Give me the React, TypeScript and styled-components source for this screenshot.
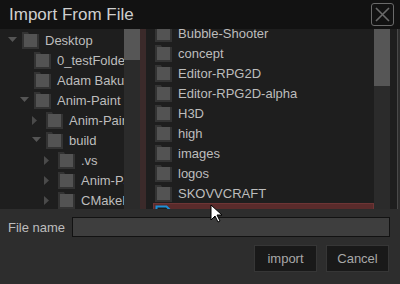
import styled, { createGlobalStyle } from "styled-components";

const GlobalStyle = createGlobalStyle`
  body {
    margin: 0;
    background: #2d2d2d;
    font-family: "Liberation Sans", Arial, sans-serif;
  }
`;

const Dialog = styled.div`
  position: relative;
  width: 400px;
  height: 284px;
  display: flex;
  flex-direction: column;
  background: #2d2d2d;
  overflow: hidden;
`;

const TitleBar = styled.div`
  height: 29px;
  flex-shrink: 0;
  display: flex;
  align-items: center;
  justify-content: space-between;
  background: #121212;
  padding: 0 6px 0 9px;
  color: #cfcfcf;
  font-size: 17px;
`;

const CloseBox = styled.div`
  width: 21px;
  height: 21px;
  border: 1px solid #6a6a6a;
  border-radius: 3px;
  display: flex;
  align-items: center;
  justify-content: center;
`;

const Body = styled.div`
  height: 180px;
  flex-shrink: 0;
  display: flex;
  background: #1e1e1e;
  border-right: 1px solid #4a4a4a;
  margin-right: 2px;
`;

const TreePane = styled.div`
  width: 124px;
  flex-shrink: 0;
  overflow: hidden;
  padding-top: 1px;
`;

const ListPane = styled.div`
  flex: 1;
  overflow: hidden;
  margin-left: 4px;
  padding-left: 3px;
`;

const ListInner = styled.div`
  margin-top: -6px;
`;

const ScrollTrack = styled.div`
  width: 16px;
  flex-shrink: 0;
  background: #2b2b2b;
`;

const Thumb = styled.div<{ $h: number }>`
  height: ${p => p.$h}px;
  background: #565656;
`;

const Splitter = styled.div`
  width: 6px;
  flex-shrink: 0;
  background: #3b2a2a;
`;

const EndGap = styled.div`
  width: 7px;
  flex-shrink: 0;
`;

const Row = styled.div<{ $level: number; $selected?: boolean }>`
  height: 20px;
  display: flex;
  align-items: center;
  white-space: nowrap;
  padding-left: ${p => 8 + p.$level * 12}px;
  color: #bdbdbd;
  font-size: 13px;
  background: ${p => (p.$selected ? "#5a2b2b" : "transparent")};
  box-shadow: ${p => (p.$selected ? "inset 0 0 0 1px #6e3535" : "none")};
`;

const ListRow = styled(Row)`
  padding-left: 2px;
`;

const Arrow = styled.span`
  width: 14px;
  flex-shrink: 0;
  display: flex;
  align-items: center;
`;

const IconSvg = styled.svg`
  flex-shrink: 0;
  display: block;
`;

const Label = styled.span`
  margin-left: 6px;
  flex-shrink: 0;
`;

const Bottom = styled.div`
  flex: 1;
  display: flex;
  flex-direction: column;
  padding: 8px 10px 0 8px;
  gap: 8px;
`;

const NameRow = styled.div`
  display: flex;
  align-items: center;
  gap: 7px;
  color: #bdbdbd;
  font-size: 13px;
`;

const NameInput = styled.div`
  flex: 1;
  height: 18px;
  background: #3e3e3e;
  border: 1px solid #121212;
`;

const Buttons = styled.div`
  display: flex;
  justify-content: flex-end;
  gap: 9px;
  padding-right: 1px;
`;

const Button = styled.div`
  width: 61px;
  height: 25px;
  display: flex;
  align-items: center;
  justify-content: center;
  background: #191919;
  border: 1px solid #363636;
  color: #a8a8a8;
  font-size: 13px;
`;

const Cursor = styled.svg`
  position: absolute;
  left: 210px;
  top: 204px;
`;

const Folder = () => (
  <IconSvg width="17" height="18" viewBox="0 0 17 18">
    <path d="M0 1h6l1 2h10v15H0z" fill="#333" />
    <rect x="2" y="3" width="13" height="13" fill="#535353" />
  </IconSvg>
);

const FileIcon = () => (
  <IconSvg width="17" height="18" viewBox="0 0 17 18">
    <path d="M1.5 2.5h10l4 4v11h-14z" fill="#1b1b1b" stroke="#1c8fd6" strokeWidth="2" />
  </IconSvg>
);

const Down = () => (
  <IconSvg width="9" height="6" viewBox="0 0 9 6">
    <path d="M0 0h9L4.5 5z" fill="#555" />
  </IconSvg>
);

const Right = () => (
  <IconSvg width="6" height="9" viewBox="0 0 6 9">
    <path d="M0 0v9l5-4.5z" fill="#4a4a4a" />
  </IconSvg>
);

type Node = { name: string; level: number; arrow?: "down" | "right" };

const tree: Node[] = [
  { name: "Desktop", level: 0, arrow: "down" },
  { name: "0_testFolder", level: 1 },
  { name: "Adam Bakuli", level: 1 },
  { name: "Anim-Paint", level: 1, arrow: "down" },
  { name: "Anim-Paint", level: 2, arrow: "right" },
  { name: "build", level: 2, arrow: "down" },
  { name: ".vs", level: 3, arrow: "right" },
  { name: "Anim-Paint", level: 3, arrow: "right" },
  { name: "CMakeFiles", level: 3, arrow: "right" },
];

const files = [
  "Bubble-Shooter",
  "concept",
  "Editor-RPG2D",
  "Editor-RPG2D-alpha",
  "H3D",
  "high",
  "images",
  "logos",
  "SKOVVCRAFT",
];

export default function App() {
  return (
    <>
      <GlobalStyle />
      <Dialog>
        <TitleBar>
          Import From File
          <CloseBox>
            <svg width="15" height="15" viewBox="0 0 15 15">
              <path d="M1 1l13 13M14 1L1 14" stroke="#6a6a6a" strokeWidth="1.6" />
            </svg>
          </CloseBox>
        </TitleBar>
        <Body>
          <TreePane>
            {tree.map((n, i) => (
              <Row key={i} $level={n.level}>
                <Arrow>{n.arrow === "down" ? <Down /> : n.arrow === "right" ? <Right /> : null}</Arrow>
                <Folder />
                <Label>{n.name}</Label>
              </Row>
            ))}
          </TreePane>
          <ScrollTrack>
            <Thumb $h={31} />
          </ScrollTrack>
          <Splitter />
          <ListPane>
            <ListInner>
              {files.map(f => (
                <ListRow key={f} $level={0}>
                  <Folder />
                  <Label>{f}</Label>
                </ListRow>
              ))}
              <ListRow $level={0} $selected>
                <FileIcon />
                <Label>Snake</Label>
              </ListRow>
            </ListInner>
          </ListPane>
          <ScrollTrack>
            <Thumb $h={57} />
          </ScrollTrack>
          <EndGap />
        </Body>
        <Bottom>
          <NameRow>
            File name
            <NameInput />
          </NameRow>
          <Buttons>
            <Button>import</Button>
            <Button>Cancel</Button>
          </Buttons>
        </Bottom>
        <Cursor width="13" height="20" viewBox="0 0 13 20">
          <path d="M1 1v15l4-4 3 6 2-1-3-6h5z" fill="#fff" stroke="#000" strokeWidth="1" />
        </Cursor>
      </Dialog>
    </>
  );
}
